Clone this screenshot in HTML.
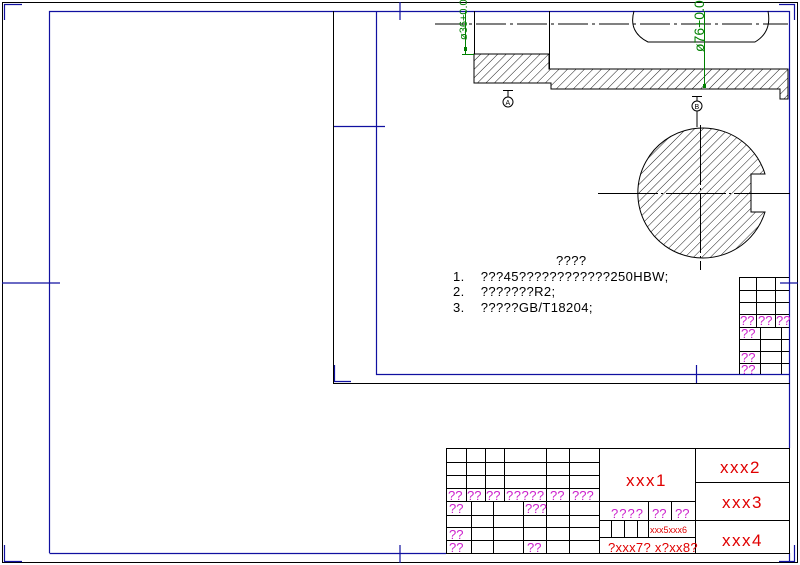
<!DOCTYPE html><html><head><style>html,body{margin:0;padding:0;background:#fff}svg{display:block}</style></head><body>
<svg width="800" height="565" viewBox="0 0 800 565" xmlns="http://www.w3.org/2000/svg" font-family="Liberation Sans, sans-serif">
<defs><pattern id="h" width="6" height="6" patternUnits="userSpaceOnUse" patternTransform="rotate(45)"><line x1="0" y1="0" x2="0" y2="6" stroke="#000" stroke-width="0.9"/></pattern></defs>
<rect x="2.5" y="2.5" width="795" height="560" fill="none" stroke="#000" stroke-width="1"/>
<g stroke="#1010a0" stroke-width="1.2" fill="none">
<path d="M4.5,20V4.5H22 M4.5,545V561.5H22 M779,4.5H794.5V20 M779,561.5H794.5V545"/>
<path d="M400,2V20 M2,283H60 M400,545V563 M780,283H798"/>
<path d="M49.5,553V11.5H789.5V448 M49.5,553.5H446 M789.5,553V562"/>
<path d="M376.5,11V374.5H790 M333,126.5H385 M696.5,365V383"/>
<path d="M334.5,365V381.5H351"/>
</g>
<path d="M333.5,11V383.5H790" stroke="#000" fill="none"/>
<path d="M435,24H788" stroke="#000" stroke-dasharray="30,4,3,4"/>
<polygon points="474,54 549,54 549,69 788,69 788,99 780,99 780,89 551,89 551,83 474,83" fill="url(#h)" stroke="#000"/>
<path d="M474.5,11V54 M549.5,11V69" stroke="#000" fill="none"/>
<path d="M634,11Q628,32 648,42L755,42Q772,32 768,11" stroke="#000" fill="none"/>
<g stroke="#008000" fill="none"><path d="M465.5,11V54 M462,54.5H474 M704.5,11V88"/></g>
<rect x="464" y="47" width="3" height="4" fill="#008000"/><rect x="703" y="84" width="3" height="4" fill="#008000"/>
<text transform="translate(467,40) rotate(-90)" font-size="11" fill="#008000">ø36+0.0</text>
<text transform="translate(704,52) rotate(-90)" font-size="14" fill="#008000">ø76+0.0</text>
<g stroke="#000" fill="none"><path d="M503,90.5H513 M508,91V97 M692,96.5H702 M697,97V101 M697,111V127"/><circle cx="508" cy="102" r="5"/><circle cx="697" cy="106" r="5"/></g>
<text x="505.5" y="105" font-size="7">A</text><text x="694.5" y="109" font-size="7">B</text>
<path d="M765,174 A65,65 0 1 0 765,212 L751,212 L751,174 Z" fill="url(#h)" stroke="#000"/>
<path d="M598,193.5H790 M700.5,125V270" stroke="#000" stroke-dasharray="60,3,2,3"/>
<g font-size="13" fill="#000" letter-spacing="0.4"><text x="556" y="265">????</text><text x="453" y="281">1.&#160;&#160;&#160;&#160;???45????????????250HBW;</text><text x="453" y="296">2.&#160;&#160;&#160;&#160;???????R2;</text><text x="453" y="312">3.&#160;&#160;&#160;&#160;?????GB/T18204;</text></g>
<g stroke="#000" fill="none">
<path d="M739.5,277V374 M739,277.5H789 M739,290.5H789 M739,302.5H789 M739,314.5H789 M739,327.5H789 M739,339.5H789 M739,351.5H789 M739,363.5H789 M756.5,277V327 M775.5,277V327 M760.5,327V374 M781.5,327V374"/>
</g>
<g font-size="13" fill="#cc22cc"><text x="740" y="325">??</text><text x="758" y="325">??</text><text x="776" y="325">??</text><text x="741" y="338">??</text><text x="741" y="362">??</text><text x="741" y="374">??</text></g>
<g stroke="#000" fill="none">
<rect x="446.5" y="448.5" width="343" height="105"/>
<path d="M446,462.5H599 M446,475.5H599 M446,488.5H599 M446,501.5H695 M446,515.5H599 M446,527.5H599 M446,540.5H599"/>
<path d="M466.5,448V501 M485.5,448V501 M504.5,448V501 M546.5,448V553 M569.5,448V553 M599.5,448V553"/>
<path d="M471.5,501V553 M493.5,501V553 M523.5,501V553"/>
<path d="M695.5,448V553 M695,482.5H789 M599,520.5H789 M599,537.5H695 M648.5,501V537 M671.5,501V520 M611.5,520V537 M624.5,520V537 M637.5,520V537"/>
</g>
<g font-size="13" fill="#cc22cc">
<text x="448" y="500">??</text><text x="467" y="500">??</text><text x="486" y="500">??</text><text x="506" y="500" letter-spacing="0.5">?????</text><text x="550" y="500">??</text><text x="572" y="500">???</text>
<text x="449" y="513">??</text><text x="525" y="513">???</text>
<text x="449" y="539">??</text><text x="449" y="552">??</text><text x="527" y="552">??</text>
<text x="611" y="518" letter-spacing="1">????</text><text x="652" y="518">??</text><text x="675" y="518">??</text>
</g>
<g fill="#e00000" letter-spacing="1.5">
<text x="626" y="486" font-size="17">xxx1</text>
<text x="720" y="473" font-size="17">xxx2</text>
<text x="722" y="508" font-size="17">xxx3</text>
<text x="722" y="546" font-size="17">xxx4</text>
<text x="650" y="533" font-size="9" letter-spacing="0">xxx5xxx6</text>
<text x="608" y="552" font-size="13" letter-spacing="0.3">?xxx7? x?xx8?</text>
</g>
</svg>
</body></html>
